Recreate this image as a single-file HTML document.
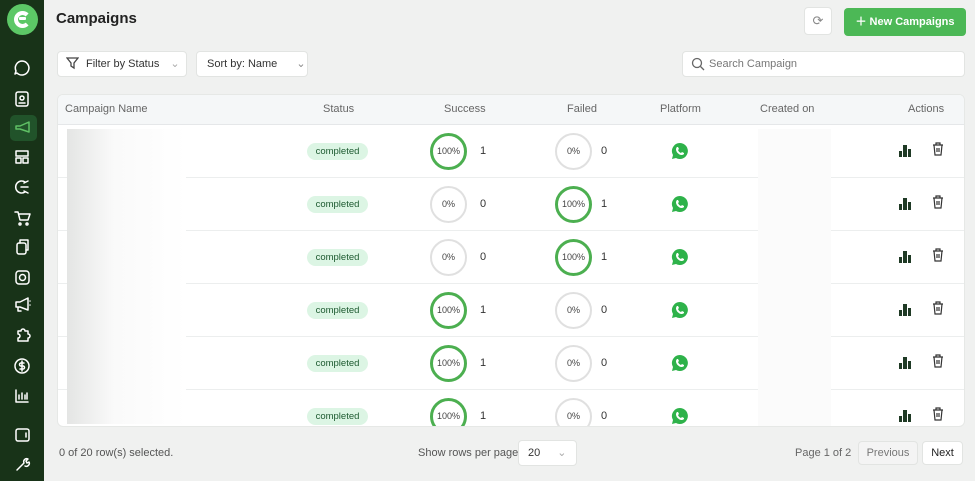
<!DOCTYPE html><html><head><style>
*{box-sizing:border-box;margin:0;padding:0}
body{width:975px;height:481px;overflow:hidden;background:#f0f1f0;font-family:"Liberation Sans",sans-serif;position:relative;color:#333}
.a{position:absolute}
.sb{left:0;top:0;width:44px;height:481px;background:#183318}
.t{font-size:11px;color:#555}
.card{left:57px;top:94px;width:908px;height:333px;background:#fff;border:1px solid #e6e8e6;border-radius:6px;overflow:hidden}
.th{position:absolute;top:0;left:0;right:0;height:30px;background:#f5f7f8;border-bottom:1px solid #e5e7e9;font-size:11px;color:#666}
.th span{position:absolute;top:8px}
.row{position:absolute;left:0;right:0;height:53px;border-bottom:1px solid #eceeee}
.badge{position:absolute;left:249px;top:18px;width:61px;height:17px;background:#dcf5e4;border-radius:9px;font-size:9.5px;color:#1d5a30;text-align:center;line-height:17px}
.c{position:absolute;top:8px;width:37px;height:37px;border-radius:50%;font-size:9px;color:#444;text-align:center;line-height:31px}
.g{border:3px solid #4caf50}.n{border:2px solid #e0e0e0;line-height:33px}
.num{position:absolute;top:20px;font-size:11px;color:#333}
.wa{position:absolute;left:613px;top:17px}
.btn{background:#fff;border:1px solid #e2e4e2;border-radius:4px}
</style></head><body>
<div class="a sb">
<div class="a" style="left:7px;top:4px;width:31px;height:31px;border-radius:50%;background:#5cc866"><div class="a" style="left:7px;top:7px;width:17px;height:17px;border:4px solid #fff;border-right-color:transparent;border-radius:50%"></div><div class="a" style="left:12px;top:13px;width:7px;height:3px;background:#fff;border-radius:1px"></div></div>
<div class="a" style="left:10px;top:115px;width:27px;height:26px;background:#21532a;border-radius:5px"></div>
<svg class="a" style="left:0;top:0" width="44" height="481" fill="none" stroke="#fff" stroke-width="1.5" stroke-linecap="round" stroke-linejoin="round">
<path d="M22 61a7 7 0 1 1-5 12l-2 1 1-3a7 7 0 0 1 6-10z"/><rect x="16" y="92" width="12" height="14" rx="2"/><circle cx="22" cy="98" r="2"/><path d="M19 103h6"/>
<path d="M16 126h4l9-4v10l-9-3h-4z" stroke="#5fc065"/>
<rect x="16" y="151" width="12" height="5"/><rect x="16" y="158" width="5" height="5"/><rect x="23" y="158" width="5" height="5"/>
<path d="M25 182a6 6 0 1 0 0 10M21 187h7M24 183l4-2M24 191l4 2"/><path d="M15 212h3l2 8h8l2-6h-11"/><circle cx="20" cy="224" r="1"/><circle cx="27" cy="224" r="1"/>
<rect x="17" y="243" width="9" height="11" rx="2"/><path d="M20 243v-3h8v10h-2"/>
<rect x="16" y="271" width="13" height="13" rx="3"/><circle cx="22.5" cy="277.5" r="3"/><path d="M16 302h4l8-4v12l-8-3h-4zM18 307v4h3M30 301v0M30 305v0"/>
<path d="M18 331h3a2 2 0 0 1 4 0h3v3a2 2 0 0 1 0 4v3h-10v-3a2 2 0 0 0 0-4z"/><circle cx="22" cy="366" r="7"/><path d="M24 363h-3a1.5 1.5 0 0 0 0 3h2a1.5 1.5 0 0 1 0 3h-3M22 361v10"/><path d="M16 390v12h12M19 399v-4M22 399v-6M25 399v-4M27 399v-6"/>
<rect x="16" y="429" width="13" height="12" rx="2"/><path d="M26 433v4"/><path d="M17 470l7-7a3 3 0 0 1 4-4l-2 2 1 2 2-1a3 3 0 0 1-4 4"/></svg>
</div>
<div class="a" style="left:56px;top:10px;font-size:15px;font-weight:bold;color:#222">Campaigns</div>
<div class="a btn" style="left:804px;top:7px;width:28px;height:28px;text-align:center;line-height:26px;color:#888;font-size:13px">⟳</div>
<div class="a" style="left:844px;top:8px;width:122px;height:28px;background:#4cb856;border-radius:4px;color:#fff;font-size:11px;font-weight:bold;line-height:28px;text-align:center">＋ New Campaigns</div>
<div class="a btn" style="left:57px;top:51px;width:130px;height:26px;font-size:11px;line-height:25px;padding-left:28px;color:#333">Filter by Status <span style="color:#aaa;margin-left:8px">⌄</span></div>
<svg class="a" style="left:66px;top:57px" width="13" height="13" fill="none" stroke="#444" stroke-width="1.3"><path d="M1 1h11l-4 5v5l-3-2v-3z"/></svg>
<div class="a btn" style="left:196px;top:51px;width:112px;height:26px;font-size:11px;line-height:25px;padding-left:10px;color:#333">Sort by: Name <span style="color:#888;margin-left:16px">⌄</span></div>
<div class="a btn" style="left:682px;top:51px;width:283px;height:26px;font-size:11px;line-height:25px;padding-left:26px;color:#777">Search Campaign</div>
<svg class="a" style="left:691px;top:57px" width="14" height="14" fill="none" stroke="#666" stroke-width="1.3"><circle cx="6" cy="6" r="4.5"/><path d="M9.5 9.5l3.5 3.5"/></svg>
<div class="a card">
<div class="th"><span style="left:7px">Campaign Name</span><span style="left:265px">Status</span><span style="left:386px">Success</span><span style="left:509px">Failed</span><span style="left:602px">Platform</span><span style="left:702px">Created on</span><span style="left:850px">Actions</span></div>
<div id="rows"></div>
<div class="a" style="left:9px;top:34px;width:119px;height:295px;background:linear-gradient(90deg,#e4e5e4,#fafafa 40%,#fff)"></div>
<div class="a" style="left:700px;top:34px;width:73px;height:300px;background:#fbfbfb"></div>
</div>
<div class="a t" style="left:59px;top:447px">0 of 20 row(s) selected.</div>
<div class="a t" style="left:418px;top:447px">Show rows per page</div>
<div class="a btn" style="left:518px;top:440px;width:59px;height:26px;font-size:11px;line-height:25px;padding-left:9px">20 <span style="color:#aaa;margin-left:14px">⌄</span></div>
<div class="a t" style="left:795px;top:447px;color:#666">Page 1 of 2</div>
<div class="a btn" style="left:858px;top:441px;width:60px;height:24px;font-size:11px;line-height:23px;text-align:center;color:#777;background:#f4f4f4">Previous</div>
<div class="a btn" style="left:922px;top:441px;width:41px;height:24px;font-size:11px;line-height:23px;text-align:center;color:#222">Next</div>
<script>
var d=[[1,0],[0,1],[0,1],[1,0],[1,0],[1,0]],h='';
d.forEach(function(r,i){h+='<div class="row" style="top:'+(30+i*53)+'px"><div class="badge">completed</div>'+
'<div class="c '+(r[0]?'g':'n')+'" style="left:372px">'+(r[0]?'100%':'0%')+'</div><div class="num" style="left:422px">'+r[0]+'</div>'+
'<div class="c '+(r[1]?'g':'n')+'" style="left:497px">'+(r[1]?'100%':'0%')+'</div><div class="num" style="left:543px">'+r[1]+'</div>'+
'<svg class="wa" width="18" height="18"><path d="M9 1a8 8 0 0 0-7 12l-1 4 4-1A8 8 0 1 0 9 1z" fill="#2eb24a"/><path d="M6 5l1 0 1 2-1 1a5 5 0 0 0 3 3l1-1 2 1 0 1c-1 1-2 1-3 1a7 7 0 0 1-5-5c0-1 0-2 1-3z" fill="#fff"/></svg>'+
'<svg style="position:absolute;left:841px;top:18px" width="14" height="14" fill="#1f3a25"><rect x="0" y="8" width="3" height="6"/><rect x="4" y="2" width="4" height="12"/><rect x="9" y="6" width="3" height="8"/></svg>'+
'<svg style="position:absolute;left:874px;top:17px" width="12" height="14" fill="none" stroke="#333" stroke-width="1.2"><path d="M1 3h10M4 3V1h4v2M2 3l1 10h6l1-10M5 6v4M7 6v4"/></svg></div>'});
document.getElementById('rows').innerHTML=h;
</script>
</body></html>
